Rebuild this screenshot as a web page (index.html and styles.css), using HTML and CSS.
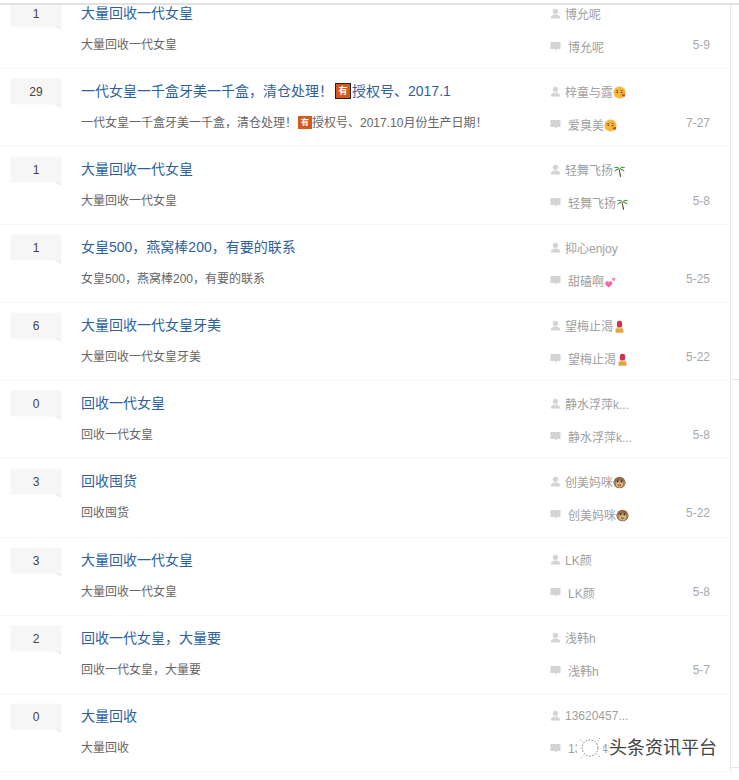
FILE: index.html
```html
<!DOCTYPE html>
<html lang="zh">
<head>
<meta charset="utf-8">
<title>列表</title>
<link rel="stylesheet" href="styles.css">
</head>
<body>
<svg class="defs" width="0" height="0" aria-hidden="true">
  <symbol id="u" viewBox="0 0 12 12"><circle cx="6" cy="3.6" r="2.9" fill="#d4d4d4"/><path d="M0.8 11.5c0-2.6 2-3.8 3.6-4.3h3.2c1.6.5 3.6 1.7 3.6 4.3z" fill="#d4d4d4"/></symbol>
  <symbol id="c" viewBox="0 0 12 12"><path d="M0.5 1h11v7.6H8L5.8 11V8.6H0.5z" fill="#d4d4d4"/></symbol>
  <symbol id="kiss" viewBox="0 0 12 12"><circle cx="6" cy="6" r="5.6" fill="#f5b83d"/><path d="M2.6 4.6l2-.6M7 3.8l2 .8" stroke="#7a4a12" stroke-width=".8" fill="none"/><circle cx="4" cy="5.8" r=".7" fill="#5b3a10"/><path d="M7 6l2 .2" stroke="#5b3a10" stroke-width=".8"/><path d="M7.6 8.4l3.6-1.2-.6 3.2z" fill="#c8401e"/></symbol>
  <symbol id="palm" viewBox="0 0 12 12"><path d="M6 4.5L7.6 11.8H6.4L5.4 5z" fill="#5b3d22"/><path d="M6 4.5C4.5 1.800 2 2 .3 3.600 2.500 3.200 4 3.600 6 4.500zM6 4.500C7.500 1.800 10 2 11.700 3.600 9.500 3.200 8 3.600 6 4.500zM6 4.500C4 4 2 5 1.200 7.200 3 5.800 4.500 5.200 6 4.500zM6 4.500C8 4 10 5 10.800 7.200 9 5.800 7.500 5.200 6 4.500z" fill="#3b8a3a"/></symbol>
  <symbol id="lip" viewBox="0 0 12 12"><rect x="3.600" y=".6" width="4.800" height="6.600" rx="2" fill="#d5314f"/><rect x="3" y="6.800" width="6" height="1.600" fill="#e8c66d"/><rect x="2.400" y="8.200" width="7.200" height="3.600" fill="#d8a94a"/></symbol>
  <symbol id="mon" viewBox="0 0 12 12"><circle cx="6" cy="6" r="5.400" fill="#8f6a45"/><circle cx="1.200" cy="6" r="1.100" fill="#b48a5f"/><circle cx="10.800" cy="6" r="1.100" fill="#b48a5f"/><ellipse cx="6" cy="7.400" rx="3.600" ry="3.200" fill="#d6b083"/><circle cx="4.300" cy="5" r=".8" fill="#2c1c0d"/><circle cx="7.700" cy="5" r=".8" fill="#2c1c0d"/><path d="M4.600 8.400h2.800" stroke="#5b3a1d" stroke-width=".8"/></symbol>
  <symbol id="heart" viewBox="0 0 12 12"><path d="M4.500 11.500C1 9.500.6 7.200 1.800 6.200c1-.8 2.200-.2 2.700.8.500-1 1.800-1.600 2.800-.8 1.200 1-.3 3.500-2.800 5.300z" fill="#f06aa8"/><path d="M9 5.800C7.400 4.700 7 3.500 7.600 2.800c.5-.5 1.100-.2 1.400.3.300-.5 1-.8 1.500-.3.600.7-.2 2-1.500 3z" fill="#f58cbc"/></symbol>
</svg>
<div class="frame">
  <ul class="list">
    <li class="row"><div class="count">1</div><div class="main"><a class="title">大量回收一代女皇</a><p class="desc">大量回收一代女皇</p></div><div class="meta"><div class="who"><svg class="ico"><use href="#u"/></svg><span>博允呢</span></div><div class="who re"><svg class="ico"><use href="#c"/></svg><span>博允呢</span></div></div><div class="date">5-9</div></li>
    <li class="row"><div class="count">29</div><div class="main"><a class="title">一代女皇一千盒牙美一千盒，清仓处理！<i class="you big">有</i>授权号、2017.1</a><p class="desc">一代女皇一千盒牙美一千盒，清仓处理！<i class="you">有</i>授权号、2017.10月份生产日期！</p></div><div class="meta"><div class="who"><svg class="ico"><use href="#u"/></svg><span>梓童与露</span><svg class="emo"><use href="#kiss"/></svg></div><div class="who re"><svg class="ico"><use href="#c"/></svg><span>爱臭美</span><svg class="emo"><use href="#kiss"/></svg></div></div><div class="date">7-27</div></li>
    <li class="row"><div class="count">1</div><div class="main"><a class="title">大量回收一代女皇</a><p class="desc">大量回收一代女皇</p></div><div class="meta"><div class="who"><svg class="ico"><use href="#u"/></svg><span>轻舞飞扬</span><svg class="emo"><use href="#palm"/></svg></div><div class="who re"><svg class="ico"><use href="#c"/></svg><span>轻舞飞扬</span><svg class="emo"><use href="#palm"/></svg></div></div><div class="date">5-8</div></li>
    <li class="row"><div class="count">1</div><div class="main"><a class="title">女皇500，燕窝棒200，有要的联系</a><p class="desc">女皇500，燕窝棒200，有要的联系</p></div><div class="meta"><div class="who"><svg class="ico"><use href="#u"/></svg><span>抑心enjoy</span></div><div class="who re"><svg class="ico"><use href="#c"/></svg><span>甜磕啊</span><svg class="emo"><use href="#heart"/></svg></div></div><div class="date">5-25</div></li>
    <li class="row"><div class="count">6</div><div class="main"><a class="title">大量回收一代女皇牙美</a><p class="desc">大量回收一代女皇牙美</p></div><div class="meta"><div class="who"><svg class="ico"><use href="#u"/></svg><span>望梅止渴</span><svg class="emo"><use href="#lip"/></svg></div><div class="who re"><svg class="ico"><use href="#c"/></svg><span>望梅止渴</span><svg class="emo"><use href="#lip"/></svg></div></div><div class="date">5-22</div></li>
    <li class="row"><div class="count">0</div><div class="main"><a class="title">回收一代女皇</a><p class="desc">回收一代女皇</p></div><div class="meta"><div class="who"><svg class="ico"><use href="#u"/></svg><span>静水浮萍k...</span></div><div class="who re"><svg class="ico"><use href="#c"/></svg><span>静水浮萍k...</span></div></div><div class="date">5-8</div></li>
    <li class="row"><div class="count">3</div><div class="main"><a class="title">回收囤货</a><p class="desc">回收囤货</p></div><div class="meta"><div class="who"><svg class="ico"><use href="#u"/></svg><span>创美妈咪</span><svg class="emo"><use href="#mon"/></svg></div><div class="who re"><svg class="ico"><use href="#c"/></svg><span>创美妈咪</span><svg class="emo"><use href="#mon"/></svg></div></div><div class="date">5-22</div></li>
    <li class="row"><div class="count">3</div><div class="main"><a class="title">大量回收一代女皇</a><p class="desc">大量回收一代女皇</p></div><div class="meta"><div class="who"><svg class="ico"><use href="#u"/></svg><span>LK颜</span></div><div class="who re"><svg class="ico"><use href="#c"/></svg><span>LK颜</span></div></div><div class="date">5-8</div></li>
    <li class="row"><div class="count">2</div><div class="main"><a class="title">回收一代女皇，大量要</a><p class="desc">回收一代女皇，大量要</p></div><div class="meta"><div class="who"><svg class="ico"><use href="#u"/></svg><span>浅韩h</span></div><div class="who re"><svg class="ico"><use href="#c"/></svg><span>浅韩h</span></div></div><div class="date">5-7</div></li>
    <li class="row"><div class="count">0</div><div class="main"><a class="title">大量回收</a><p class="desc">大量回收</p></div><div class="meta"><div class="who"><svg class="ico"><use href="#u"/></svg><span>13620457...</span></div><div class="who re"><svg class="ico"><use href="#c"/></svg><span>13620457...</span></div></div><div class="date"></div></li>
  </ul>
  <div class="topline"></div>
  <div class="tick t1"></div>
  <div class="tick t2"></div>
  <div class="mark">
    <svg class="mark-ico" viewBox="0 0 26 24"><circle cx="13" cy="12" r="8" fill="none" stroke="#777" stroke-width="1" stroke-dasharray="1.500 1.500"/><path d="M3 3l3 3M23 2l-3 4M4 22l3-3M23 21l-3-3" stroke="#999" stroke-width="1" stroke-dasharray="1 1.500"/></svg>
    <span class="mark-text">头条资讯平台</span>
  </div>
</div>
</body>
</html>
```
FILE: styles.css
```css
* { box-sizing: border-box; }
html, body { margin: 0; padding: 0; background: #fff; }
body { width: 739px; height: 780px; overflow: hidden; font-family: "Liberation Sans", "Noto Sans CJK SC", sans-serif; }
.defs { position: absolute; }
.frame { position: relative; width: 739px; height: 780px; overflow: hidden; }
.list { list-style: none; margin: -10px 8px 0 0; padding: 0; width: 731px; border-right: 1px solid #e8e8e8; }
.row { display: flex; height: 78.08px; padding-right: 2px; position: relative; }
.row::after { content: ""; position: absolute; left: 0; right: 2px; bottom: -1px; height: 1px; background: #f7f7f7; }
.count { position: relative; flex: none; width: 50px; height: 25px; margin: 11px 0 0 11px; background: #f6f6f6; box-shadow: 0 0 1px #e4e4e4; color: #444; font-size: 12px; line-height: 27px; text-align: center; }
.count::after { content: ""; position: absolute; right: 0; top: 25px; border-style: solid; border-width: 4px 0 0 7px; border-color: #eeeeee transparent transparent transparent; }
.main { flex: none; width: 469px; margin-left: 20px; min-width: 0; }
.title { display: block; margin-top: 13px; height: 20px; font-size: 14px; line-height: 20px; color: #2f5f9e; white-space: nowrap; }
.desc { margin: 12px 0 0; height: 20px; font-size: 12px; line-height: 20px; color: #666; white-space: nowrap; }
.you { display: inline-block; width: 14px; height: 13px; margin: 0 0 0 1px; background: #d9591c; color: #fff; font-size: 8px; font-style: normal; font-weight: 700; line-height: 13px; text-align: center; vertical-align: 2px; }
.you.big { width: 16px; height: 16px; margin: 0 1px 0 2px; border: 1px solid #222; line-height: 14px; font-size: 9px; vertical-align: 2px; }
.meta { flex: none; width: 120px; padding-top: 14px; }
.who { display: flex; align-items: center; height: 18px; color: #a0a0a0; font-size: 12px; white-space: nowrap; }
.who.re { margin-top: 15px; }
.who.re span { margin-left: 3px; }
.ico { flex: none; width: 11px; height: 11px; margin-right: 4px; }
.emo { flex: none; width: 13px; height: 13px; margin-top: 2px; }
.date { flex: 1; padding: 46px 18px 0 0; font-size: 12px; line-height: 18px; color: #a8a8a8; text-align: right; white-space: nowrap; }
.topline { position: absolute; left: 0; top: 0; width: 100%; height: 5px; background: #fff; border-bottom: 2px solid #e2e2e2; }
.tick { position: absolute; left: 730px; width: 9px; height: 1px; background: #e8e8e8; }
.t1 { top: 379px; }
.t2 { top: 767px; }
.mark { position: absolute; left: 577px; top: 736px; display: flex; align-items: center; height: 24px; color: #444; font-size: 18px; line-height: 24px; }
.mark-ico { width: 26px; height: 24px; margin-right: 6px; background: #fff; }
.mark-text { background: #fff; }
```
